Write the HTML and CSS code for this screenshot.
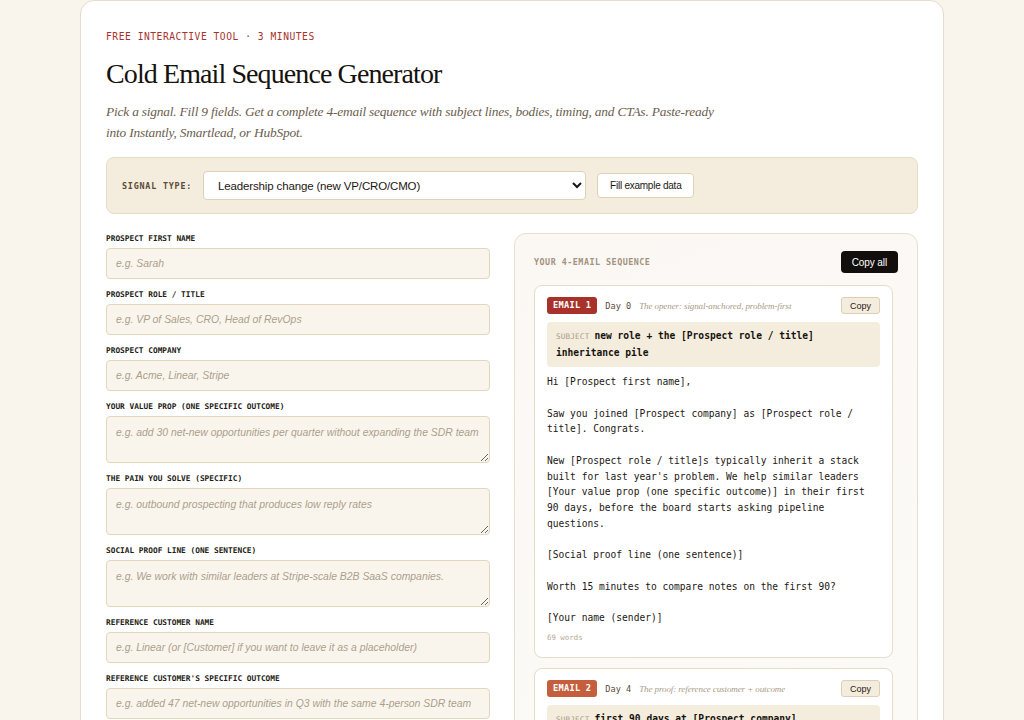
FILE: index.html
```html
<!DOCTYPE html>
<html lang="en">
<head>
    <meta charset="UTF-8">
    <meta name="viewport" content="width=device-width, initial-scale=1.0">
    <title>Cold Email Sequence Generator</title>
    <link rel="stylesheet" href="styles.css">
</head>
<body>
    <div class="container">
        <div class="eyebrow">FREE INTERACTIVE TOOL · 3 MINUTES</div>
        <h1>Cold Email Sequence Generator</h1>
        <p class="lede">Pick a signal. Fill 9 fields. Get a complete 4-email sequence with subject lines, bodies, timing, and CTAs. Paste-ready into Instantly, Smartlead, or HubSpot.</p>

        <div class="signal-box">
            <label for="signal" class="signal-label">SIGNAL TYPE:</label>
            <select id="signal" class="signal-select">
                <option>Leadership change (new VP/CRO/CMO)</option>
                <option>Funding round</option>
                <option>Hiring spree</option>
                <option>Tech stack change</option>
            </select>
            <button class="btn-light">Fill example data</button>
        </div>

        <div class="layout">
            <div class="fields">
                <label class="field-label" for="firstName">PROSPECT FIRST NAME</label>
                <input class="field" type="text" id="firstName" placeholder="e.g. Sarah">

                <label class="field-label" for="role">PROSPECT ROLE / TITLE</label>
                <input class="field" type="text" id="role" placeholder="e.g. VP of Sales, CRO, Head of RevOps">

                <label class="field-label" for="company">PROSPECT COMPANY</label>
                <input class="field" type="text" id="company" placeholder="e.g. Acme, Linear, Stripe">

                <label class="field-label" for="valueProp">YOUR VALUE PROP (ONE SPECIFIC OUTCOME)</label>
                <textarea class="field area" id="valueProp" placeholder="e.g. add 30 net-new opportunities per quarter without expanding the SDR team"></textarea>

                <label class="field-label" for="pain">THE PAIN YOU SOLVE (SPECIFIC)</label>
                <textarea class="field area" id="pain" placeholder="e.g. outbound prospecting that produces low reply rates"></textarea>

                <label class="field-label" for="proof">SOCIAL PROOF LINE (ONE SENTENCE)</label>
                <textarea class="field area" id="proof" placeholder="e.g. We work with similar leaders at Stripe-scale B2B SaaS companies."></textarea>

                <label class="field-label" for="refName">REFERENCE CUSTOMER NAME</label>
                <input class="field" type="text" id="refName" placeholder="e.g. Linear (or [Customer] if you want to leave it as a placeholder)">

                <label class="field-label" for="refOutcome">REFERENCE CUSTOMER'S SPECIFIC OUTCOME</label>
                <input class="field" type="text" id="refOutcome" placeholder="e.g. added 47 net-new opportunities in Q3 with the same 4-person SDR team">

                <label class="field-label" for="sender">YOUR NAME (SENDER)</label>
                <input class="field" type="text" id="sender" placeholder="e.g. Alex">
            </div>

            <div class="output">
                <div class="output-head">
                    <span class="output-title">YOUR 4-EMAIL SEQUENCE</span>
                    <button class="btn-dark">Copy all</button>
                </div>

                <div class="email">
                    <div class="email-head">
                        <span class="badge">EMAIL 1</span>
                        <span class="day">Day 0</span>
                        <span class="purpose">The opener: signal-anchored, problem-first</span>
                        <button class="btn-copy">Copy</button>
                    </div>
                    <div class="subject"><span class="subject-tag">SUBJECT</span>new role + the [Prospect role / title] inheritance pile</div>
                    <div class="email-body">Hi [Prospect first name],

Saw you joined [Prospect company] as [Prospect role / title]. Congrats.

New [Prospect role / title]s typically inherit a stack built for last year's problem. We help similar leaders [Your value prop (one specific outcome)] in their first 90 days, before the board starts asking pipeline questions.

[Social proof line (one sentence)]

Worth 15 minutes to compare notes on the first 90?

[Your name (sender)]</div>
                    <div class="word-count">69 words</div>
                </div>

                <div class="email">
                    <div class="email-head">
                        <span class="badge badge-2">EMAIL 2</span>
                        <span class="day">Day 4</span>
                        <span class="purpose">The proof: reference customer + outcome</span>
                        <button class="btn-copy">Copy</button>
                    </div>
                    <div class="subject"><span class="subject-tag">SUBJECT</span>first 90 days at [Prospect company]</div>
                    <div class="email-body">Hi [Prospect first name],

Quick follow-up. When [Reference customer name] brought us in, their new leadership had the same problem: [The pain you solve (specific)].

They [Reference customer's specific outcome].

Open to a short call to see if the same playbook fits [Prospect company]?

[Your name (sender)]</div>
                    <div class="word-count">52 words</div>
                </div>

                <div class="email">
                    <div class="email-head">
                        <span class="badge badge-3">EMAIL 3</span>
                        <span class="day">Day 9</span>
                        <span class="purpose">The angle: a new insight, no ask</span>
                        <button class="btn-copy">Copy</button>
                    </div>
                    <div class="subject"><span class="subject-tag">SUBJECT</span>one thing I'd check first</div>
                    <div class="email-body">[Prospect first name],

Most teams we talk to find the gap isn't volume. It's [The pain you solve (specific)].

Happy to send over the checklist we use. No call needed.

[Your name (sender)]</div>
                    <div class="word-count">38 words</div>
                </div>

                <div class="email">
                    <div class="email-head">
                        <span class="badge badge-4">EMAIL 4</span>
                        <span class="day">Day 14</span>
                        <span class="purpose">The breakup: permission to close the loop</span>
                        <button class="btn-copy">Copy</button>
                    </div>
                    <div class="subject"><span class="subject-tag">SUBJECT</span>should I close the loop?</div>
                    <div class="email-body">Hi [Prospect first name],

I haven't heard back, so I'll assume the timing is off. If pipeline becomes a priority in your first 90, just reply "later" and I'll check back next quarter.

[Your name (sender)]</div>
                    <div class="word-count">41 words</div>
                </div>
            </div>
        </div>
    </div>
</body>
</html>
```

FILE: styles.css
```css
body {
    margin: 0;
    background: #faf5ec;
    font-family: "Liberation Serif", "Times New Roman", serif;
    color: #1c1712;
}
.container {
    box-sizing: border-box;
    width: 864px;
    margin: 0 auto 40px;
    padding: 29px 25px 30px;
    background: #ffffff;
    border: 1px solid #e6dcc8;
    border-radius: 14px;
}
.eyebrow {
    font-family: "DejaVu Sans Mono", monospace;
    font-size: 9.6px;
    line-height: 14px;
    letter-spacing: 0.55px;
    color: #a8322a;
}
h1 {
    margin: 13px 0 0;
    font-size: 28px;
    line-height: 34px;
    font-weight: normal;
    letter-spacing: -0.9px;
    color: #16120e;
}
.lede {
    margin: 10px 0 0;
    max-width: 620px;
    font-size: 13.4px;
    line-height: 21px;
    letter-spacing: -0.2px;
    font-style: italic;
    color: #6b5d4d;
}
.signal-box {
    display: flex;
    align-items: center;
    gap: 11px;
    margin-top: 14px;
    padding: 13px 15px;
    background: #f4eddd;
    border: 1px solid #e6dcc6;
    border-radius: 8px;
}
.signal-label {
    font-family: "DejaVu Sans Mono", monospace;
    font-size: 8.4px;
    font-weight: bold;
    letter-spacing: 0.8px;
    color: #5a4a3a;
}
.signal-select {
    width: 383px;
    height: 29px;
    padding: 0 10px;
    font-family: "Liberation Sans", Arial, sans-serif;
    font-size: 11.5px;
    letter-spacing: -0.15px;
    color: #1c1712;
    background: #ffffff;
    border: 1px solid #ddd1b8;
    border-radius: 4px;
}
.btn-light {
    height: 25px;
    padding: 0 12px;
    font-family: "Liberation Sans", Arial, sans-serif;
    font-size: 10px;
    letter-spacing: -0.25px;
    color: #1c1712;
    background: #ffffff;
    border: 1px solid #ddd1b8;
    border-radius: 4px;
    cursor: pointer;
}
.layout {
    display: grid;
    grid-template-columns: 384px 1fr;
    gap: 24px;
    margin-top: 19px;
    align-items: start;
}
.fields {
    display: flex;
    flex-direction: column;
}
.field-label {
    font-family: "DejaVu Sans Mono", monospace;
    font-size: 7.8px;
    line-height: 12px;
    font-weight: bold;
    color: #231b14;
    margin-bottom: 3px;
}
.field {
    box-sizing: border-box;
    width: 100%;
    height: 31px;
    margin-bottom: 10px;
    padding: 0 8px 0 9px;
    font-family: "Liberation Sans", Arial, sans-serif;
    font-size: 10.4px;
    color: #1c1712;
    background: #faf5ec;
    border: 1px solid #e2d6bd;
    border-radius: 4px;
}
.field::placeholder {
    font-style: italic;
    color: #ab9f8c;
}
.area {
    height: 47px;
    padding: 8px 8px 8px 9px;
    line-height: 15px;
    resize: vertical;
}
.output {
    padding: 17px 19px 20px;
    background: linear-gradient(160deg, #fbf8f4 0%, #fcfaf7 60%, #faf6f1 100%);
    border: 1px solid #e8dfcc;
    border-radius: 12px;
}
.output-head {
    display: flex;
    justify-content: space-between;
    align-items: center;
    margin-bottom: 12px;
}
.output-title {
    font-family: "DejaVu Sans Mono", monospace;
    font-size: 8.4px;
    font-weight: bold;
    letter-spacing: 0.5px;
    color: #a3927e;
}
.btn-dark {
    height: 22px;
    padding: 0 11px;
    font-family: "Liberation Sans", Arial, sans-serif;
    font-size: 10px;
    letter-spacing: -0.1px;
    color: #ffffff;
    background: #110e0b;
    border: none;
    border-radius: 4px;
    cursor: pointer;
}
.email {
    margin: 0 5px 10px 0;
    padding: 11px 12px 14px;
    background: #ffffff;
    border: 1px solid #e6dcc8;
    border-radius: 8px;
}
.email-head {
    display: flex;
    align-items: center;
    gap: 8px;
}
.badge {
    padding: 0 6px;
    height: 17px;
    line-height: 17px;
    font-family: "DejaVu Sans Mono", monospace;
    font-size: 8.6px;
    font-weight: bold;
    letter-spacing: 0.3px;
    color: #ffffff;
    background: #a8322a;
    border-radius: 3px;
}
.badge-2 {
    background: #c55e3c;
}
.badge-3 {
    background: #c98a3a;
}
.badge-4 {
    background: #6b5d4d;
}
.day {
    font-family: "DejaVu Sans Mono", monospace;
    font-size: 8.6px;
    color: #5a4a3a;
}
.purpose {
    font-size: 9px;
    letter-spacing: -0.1px;
    font-style: italic;
    color: #a89b87;
}
.btn-copy {
    margin-left: auto;
    height: 17px;
    padding: 0 8px;
    font-family: "Liberation Sans", Arial, sans-serif;
    font-size: 9px;
    color: #2a2018;
    background: #f4eddd;
    border: 1px solid #dccfb5;
    border-radius: 3px;
    cursor: pointer;
}
.subject {
    margin-top: 8px;
    padding: 6px 9px;
    background: #f4eddd;
    border-radius: 4px;
    font-family: "DejaVu Sans Mono", monospace;
    font-size: 9.6px;
    line-height: 16px;
    font-weight: bold;
    color: #16120e;
}
.subject-tag {
    font-size: 7.6px;
    font-weight: normal;
    letter-spacing: 0.2px;
    color: #a89b87;
    margin-right: 5px;
}
.email-body {
    margin-top: 7px;
    font-family: "DejaVu Sans Mono", monospace;
    font-size: 9.6px;
    line-height: 15.75px;
    white-space: pre-wrap;
    color: #1c1712;
}
.word-count {
    margin-top: 7px;
    font-family: "DejaVu Sans Mono", monospace;
    font-size: 7.4px;
    line-height: 10px;
    color: #b5a996;
}
```
